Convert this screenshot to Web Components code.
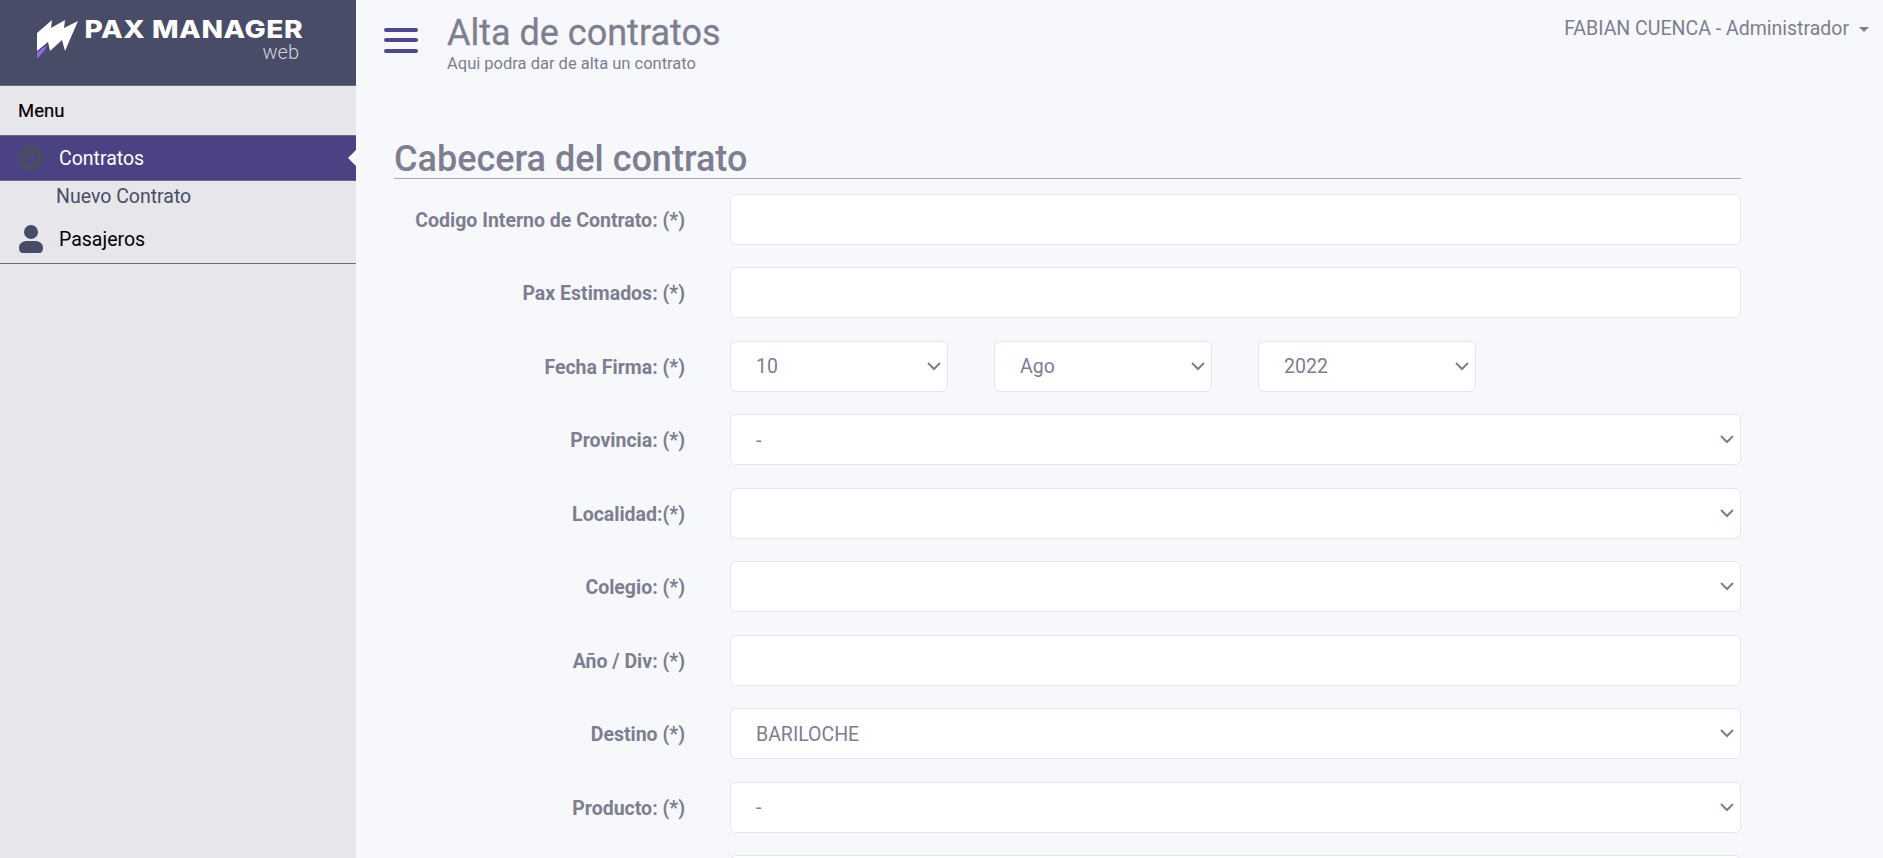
<!DOCTYPE html>
<html lang="es">
<head>
<meta charset="UTF-8">
<title>Alta de contratos</title>
<style>
  html, body { margin: 0; height: 100%; overflow: hidden; background: #f7f8fc; font-family: Roboto, "Liberation Sans", sans-serif; }
</style>
</head>
<body>

<template id="logo-template">
  <style>
    :host { display: flex; box-sizing: border-box; height: 85px; padding: 17px 0 0 37px; gap: 6px; background: #484c66; color: #fff; }
    svg { flex: none; margin-top: 2px; }
    .txt { display: flex; flex-direction: column; align-items: flex-end; width: 219px; }
    .name { font: 800 24.5px/24px Inter, Roboto, sans-serif; letter-spacing: .5px; white-space: nowrap; transform: scaleX(1.15); transform-origin: right center; }
    .web { font: 300 20px/20px Roboto, sans-serif; color: #d2d3db; margin: 1px 4px 0 0; }
  </style>
  <svg width="41" height="40" viewBox="0 0 41 40">
    <path d="M0 14 L15 1 L14 9 L28 1 L27 9 L41 2 L28 32 L25 21 L13 32 L11 23 L0 32 Z" fill="#fff"/>
    <path d="M0 33.5 L10 26 L8 31 L0 40 Z" fill="#8f66f0"/>
  </svg>
  <div class="txt"><span class="name">PAX MANAGER</span><span class="web">web</span></div>
</template>

<template id="item-template">
  <style>
    :host { display: flex; align-items: center; box-sizing: border-box; height: 46px; padding-left: 18px; gap: 15px; font: 400 19.5px Roboto, sans-serif; color: #000; position: relative; }
    :host([active]) { background: #4b4284; color: #fff; border-top: 1px solid #6b6b80; border-bottom: 1px solid #6b6b80; }
    :host([active])::after { content: ""; position: absolute; right: 0; top: 50%; margin-top: -8px; border: 8px solid transparent; border-left: 0; border-right-color: #f7f8fc; }
    .ic { width: 26px; height: 28px; flex: none; display: flex; align-items: center; justify-content: center; }
  </style>
  <span class="ic"><slot name="icon"></slot></span>
  <slot></slot>
</template>

<template id="sidebar-template">
  <style>
    :host { display: block; width: 356px; flex: none; background: #e7e6ea; }
    .menu { height: 50px; box-sizing: border-box; border-top: 1px solid #6b6b80; display: flex; align-items: center; padding-left: 18px; font: 400 18.5px Roboto, sans-serif; color: #000; -webkit-text-stroke: .2px #000; }
    .sub { font: 400 19.5px/28px Roboto, sans-serif; color: #484c66; padding: 2px 0 5px 56px; }
    .foot { border-bottom: 1px solid #6b6b80; padding-bottom: 1px; }
  </style>
  <pax-logo></pax-logo>
  <div class="menu">Menu</div>
  <pax-item active>
    <svg slot="icon" width="26" height="26" viewBox="0 0 26 26"><circle cx="13" cy="13" r="13" fill="#484c66"/><path d="M7.5 13.5l4 4 7.5-8.5" fill="none" stroke="#4b4284" stroke-width="3"/></svg>
    Contratos
  </pax-item>
  <div class="sub">Nuevo Contrato</div>
  <div class="foot">
    <pax-item>
      <svg slot="icon" width="24" height="28" viewBox="0 0 24 28"><circle cx="12" cy="7" r="7" fill="#484c66"/><path d="M0 23 C0 18 4 16 8 16 H16 C20 16 24 18 24 23 Q24 28 20 28 H4 Q0 28 0 23 Z" fill="#484c66"/></svg>
      Pasajeros
    </pax-item>
  </div>
</template>

<template id="topbar-template">
  <style>
    :host { display: flex; align-items: flex-start; height: 85px; box-sizing: border-box; padding: 0 14px 0 28px; color: #7e7e90; }
    .burger { width: 34px; flex: none; margin-top: 28px; display: flex; flex-direction: column; }
    .burger i { display: block; height: 3.5px; border-radius: 2px; background: #4f4796; margin-bottom: 6.5px; }
    .burger i:nth-child(2) { margin-bottom: 7.5px; }
    .head { margin-left: 29px; padding-top: 13px; flex: 1; }
    h1 { margin: 0; font: 400 36px/40px Roboto, sans-serif; -webkit-text-stroke: .3px #7e7e90; }
    p { margin: 1px 0 0; font: 400 16.5px/19px Roboto, sans-serif; }
    .user { font: 400 19.5px/21px Roboto, sans-serif; padding-top: 18px; display: flex; align-items: center; gap: 10px; }
    .user::after { content: ""; border: 5.5px solid transparent; border-top-color: #7e7e90; border-bottom: 0; margin-top: 2px; }
  </style>
  <div class="burger"><i></i><i></i><i></i></div>
  <div class="head"><h1><slot name="title"></slot></h1><p><slot name="sub"></slot></p></div>
  <div class="user"><slot name="user"></slot></div>
</template>

<template id="field-template">
  <style>
    :host { display: grid; grid-template-columns: 291px 1fr; column-gap: 45px; align-items: center; height: 51px; margin-bottom: 22.45px; color: #7e7e90; }
    label { font: 700 19.5px Roboto, sans-serif; text-align: right; padding-top: 2px; }
    .ctl { display: flex; gap: 46px; }
  </style>
  <label><slot name="label"></slot></label>
  <div class="ctl"><slot></slot></div>
</template>

<template id="input-template">
  <style>
    :host { display: block; flex: 1; }
    input { display: block; box-sizing: border-box; width: 100%; height: 51px; padding: 0 24px; border: 1px solid #e5e5ee; border-radius: 6px; background: #fff; color: #7e7e90; font: 400 19.5px Roboto, sans-serif; outline: 0; }
  </style>
  <input type="text">
</template>

<template id="select-template">
  <style>
    :host { display: block; flex: 1; position: relative; }
    :host([small]) { flex: 0 0 218px; }
    .box { box-sizing: border-box; height: 51px; padding: 1px 25px 0; display: flex; align-items: center; border: 1px solid #e5e5ee; border-radius: 6px; background: #fff; color: #7e7e90; font: 400 19.5px Roboto, sans-serif; }
    svg { position: absolute; right: 6px; top: 20px; }
  </style>
  <div class="box"><slot></slot></div>
  <svg width="16" height="10" viewBox="0 0 16 10"><path d="M2 2l6 6 6-6" fill="none" stroke="#7e7e90" stroke-width="2"/></svg>
</template>

<template id="form-template">
  <style>
    :host { display: block; width: 1347px; margin: 41px 0 0 38px; color: #7e7e90; }
    h2 { margin: 0; height: 53px; box-sizing: border-box; padding-top: 14px; font: 500 36px/39px Roboto, sans-serif; border-bottom: 1px solid #a9a9b4; }
    .rows { padding-top: 15px; }
  </style>
  <h2><slot name="title"></slot></h2>
  <div class="rows"><slot></slot></div>
</template>

<template id="app-template">
  <style>
    :host { display: flex; height: 100vh; overflow: hidden; background: #f7f8fc; }
    main { flex: 1; min-width: 0; }
  </style>
  <pax-sidebar></pax-sidebar>
  <main><slot></slot></main>
</template>

<pax-app>
  <pax-topbar>
    <span slot="title">Alta de contratos</span>
    <span slot="sub">Aqui podra dar de alta un contrato</span>
    <span slot="user">FABIAN CUENCA - Administrador</span>
  </pax-topbar>
  <pax-form>
    <span slot="title">Cabecera del contrato</span>
    <pax-field><span slot="label">Codigo Interno de Contrato: (*)</span><pax-input></pax-input></pax-field>
    <pax-field><span slot="label">Pax Estimados: (*)</span><pax-input></pax-input></pax-field>
    <pax-field><span slot="label">Fecha Firma: (*)</span><pax-select small>10</pax-select><pax-select small>Ago</pax-select><pax-select small>2022</pax-select></pax-field>
    <pax-field><span slot="label">Provincia: (*)</span><pax-select>-</pax-select></pax-field>
    <pax-field><span slot="label">Localidad:(*)</span><pax-select></pax-select></pax-field>
    <pax-field><span slot="label">Colegio: (*)</span><pax-select></pax-select></pax-field>
    <pax-field><span slot="label">Año / Div: (*)</span><pax-input></pax-input></pax-field>
    <pax-field><span slot="label">Destino (*)</span><pax-select>BARILOCHE</pax-select></pax-field>
    <pax-field><span slot="label">Producto: (*)</span><pax-select>-</pax-select></pax-field>
    <pax-field><span slot="label"></span><pax-input></pax-input></pax-field>
  </pax-form>
</pax-app>

<script>
  // every element just clones its template into an open shadow root
  const fromTemplate = (tag, id) => {
    customElements.define(tag, class extends HTMLElement {
      constructor() {
        super();
        this.attachShadow({ mode: 'open' });
        this.shadowRoot.appendChild(document.getElementById(id).content.cloneNode(true));
      }
    });
  };

  fromTemplate('pax-logo', 'logo-template');
  fromTemplate('pax-item', 'item-template');
  fromTemplate('pax-sidebar', 'sidebar-template');
  fromTemplate('pax-topbar', 'topbar-template');
  fromTemplate('pax-field', 'field-template');
  fromTemplate('pax-input', 'input-template');
  fromTemplate('pax-select', 'select-template');
  fromTemplate('pax-form', 'form-template');
  fromTemplate('pax-app', 'app-template');
</script>
</body>
</html>
